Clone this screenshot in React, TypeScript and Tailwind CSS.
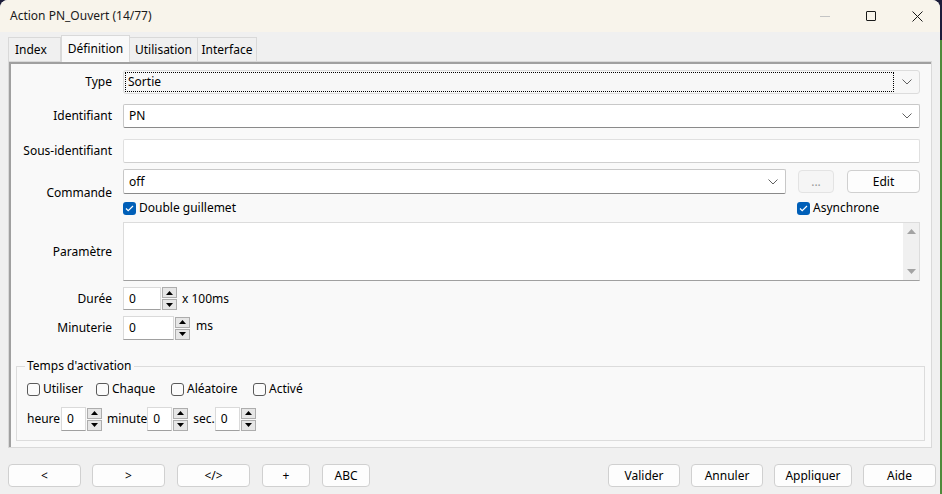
import React from 'react';

const font = "font-['Noto_Sans',sans-serif]";

function Chevron() {
  return (
    <svg width="10" height="6" viewBox="0 0 10 6">
      <path d="M0.5 0.5l4.5 4.5 4.5-4.5" fill="none" stroke="#606060" strokeWidth="1" />
    </svg>
  );
}

function CheckBox({ checked, label }: { checked?: boolean; label: string }) {
  return (
    <div className="flex items-center gap-[3px]">
      {checked ? (
        <div className="w-[13px] h-[13px] rounded-[3px] bg-[#005fb8] flex items-center justify-center">
          <svg width="9" height="7" viewBox="0 0 9 7">
            <path d="M1 3.5l2.2 2.2L8 1" fill="none" stroke="white" strokeWidth="1.2" />
          </svg>
        </div>
      ) : (
        <div className="w-[13px] h-[13px] rounded-[3px] border border-[#5a5a5a] bg-[#fbfbfb]" />
      )}
      <span>{label}</span>
    </div>
  );
}

function Spin({ box, h = 24 }: { box: number; h?: number }) {
  return (
    <div className="flex" style={{ height: h }}>
      <div
        className="bg-white border border-[#dadada] border-b-[#a0a0a0] flex items-center pl-[5px]"
        style={{ width: box }}
      >
        0
      </div>
      <div className="flex flex-col justify-center gap-[1px] ml-[1px] w-[15px]">
        <div className="h-[11px] border border-[#adadad] bg-[#e6e6e6] flex items-center justify-center">
          <svg width="7" height="4" viewBox="0 0 7 4"><path d="M0 4h7L3.5 0z" fill="#000" /></svg>
        </div>
        <div className="h-[11px] border border-[#adadad] bg-[#e6e6e6] flex items-center justify-center">
          <svg width="7" height="4" viewBox="0 0 7 4"><path d="M0 0h7L3.5 4z" fill="#000" /></svg>
        </div>
      </div>
    </div>
  );
}

function Btn({ w, label, disabled }: { w: number; label: string; disabled?: boolean }) {
  return (
    <div
      className={`h-[23px] rounded-[4px] border flex items-center justify-center ${
        disabled ? 'border-[#e3e3e3] bg-[#f5f5f5] text-[#9a9a9a]' : 'border-[#d0d0d0] bg-[#fdfdfd] text-black'
      }`}
      style={{ width: w }}
    >
      {label}
    </div>
  );
}

function Row({ label, children, className = '' }: { label: string; children: React.ReactNode; className?: string }) {
  return (
    <div className={`flex items-center ${className}`}>
      <div className="w-[101px] text-right shrink-0">{label}</div>
      <div className="ml-[11px] flex-1">{children}</div>
    </div>
  );
}

export default function App() {
  return (
    <div className={`w-[942px] h-[494px] flex bg-[#1c1d3a] overflow-hidden text-[12px] text-black ${font}`}>
      <div className="w-[940px] h-[494px] rounded-t-[8px] bg-[#f0f0f0] flex flex-col overflow-hidden">
        {/* title bar */}
        <div className="h-[32px] bg-[#f8f4eb] flex items-center shrink-0">
          <div className="pl-[10px] flex-1 text-[#1a1a1a]">Action PN_Ouvert (14/77)</div>
          <div className="w-[46px] h-[32px] flex items-center justify-center">
            <div className="w-[10px] h-[1px] bg-[#c4c4c4]" />
          </div>
          <div className="w-[46px] h-[32px] flex items-center justify-center">
            <div className="w-[10px] h-[10px] border border-[#1a1a1a] rounded-[1px]" />
          </div>
          <div className="w-[46px] h-[32px] flex items-center justify-center">
            <svg width="11" height="11" viewBox="0 0 11 11">
              <path d="M0.5 0.5l10 10M10.5 0.5l-10 10" stroke="#1a1a1a" strokeWidth="1" />
            </svg>
          </div>
        </div>

        {/* tabs */}
        <div className="h-[29px] flex items-end pl-[8px] shrink-0">
          <div className="h-[24px] px-[6px] border border-b-0 border-[#d9d9d9] bg-[#f0f0f0] flex items-center w-[53px]">Index</div>
          <div className="h-[27px] -mb-[1px] relative z-10 border border-b-0 border-[#d9d9d9] bg-[#f9f9f9] flex items-center justify-center w-[69px]">
            Définition
          </div>
          <div className="h-[24px] border border-b-0 border-l-0 border-[#d9d9d9] bg-[#f0f0f0] flex items-center justify-center w-[68px]">Utilisation</div>
          <div className="h-[24px] border border-b-0 border-l-0 border-[#d9d9d9] bg-[#f0f0f0] flex items-center justify-center w-[59px]">Interface</div>
        </div>

        {/* panel */}
        <div className="mx-[8px] h-[387px] border border-[#d9d9d9] bg-[#f9f9f9] shrink-0 flex">
          <div className="flex-1 border-l-[2px] border-t-[2px] border-[#a0a0a0] flex flex-col pt-[6px] pr-[11px]">
            <Row label="Type">
              <div className="h-[24px] border border-[#dcdcdc] bg-[#f7f7f7] rounded-[3px] flex items-center pl-[1px] pr-[7px]">
                <div className="flex-1 h-[20px] border border-dotted border-black flex items-center pl-[2px]">Sortie</div>
                <div className="ml-[8px]"><Chevron /></div>
              </div>
            </Row>
            <Row label="Identifiant" className="mt-[10px]">
              <div className="h-[24px] border border-[#c8c8c8] border-b-[#8a8a8a] bg-white rounded-[2px] flex items-center pl-[5px] pr-[7px]">
                <div className="flex-1">PN</div>
                <Chevron />
              </div>
            </Row>
            <Row label="Sous-identifiant" className="mt-[11px]">
              <div className="h-[24px] border border-[#e0e0e0] border-b-[#cfcfcf] bg-white rounded-[2px]" />
            </Row>
            <Row label="Commande" className="mt-[6px]">
              <div className="flex flex-col">
                <div className="flex items-center">
                  <div className="flex-1 h-[25px] border border-[#c8c8c8] border-b-[#8a8a8a] bg-white rounded-[2px] flex items-center pl-[5px] pr-[7px]">
                    <div className="flex-1">off</div>
                    <Chevron />
                  </div>
                  <div className="ml-[12px]"><Btn w={36} label="..." disabled /></div>
                  <div className="ml-[13px]"><Btn w={73} label="Edit" /></div>
                </div>
                <div className="flex items-center h-[18px] mt-[5px]">
                  <div className="flex-1"><CheckBox checked label="Double guillemet" /></div>
                  <div className="w-[123px]"><CheckBox checked label="Asynchrone" /></div>
                </div>
              </div>
            </Row>
            <Row label="Paramètre" className="mt-[5px]">
              <div className="h-[59px] border border-[#dcdcdc] border-b-[#a0a0a0] bg-white flex justify-end">
                <div className="w-[16px] bg-[#f0f0f0] flex flex-col items-center justify-between py-[6px]">
                  <svg width="9" height="5" viewBox="0 0 9 5"><path d="M0 5h9L4.5 0z" fill="#a3a3a3" /></svg>
                  <svg width="9" height="5" viewBox="0 0 9 5"><path d="M0 0h9L4.5 5z" fill="#a3a3a3" /></svg>
                </div>
              </div>
            </Row>
            <Row label="Durée" className="mt-[6px]">
              <div className="flex items-center gap-[5px]">
                <Spin box={38} h={23} />
                <span>x 100ms</span>
              </div>
            </Row>
            <Row label="Minuterie" className="mt-[6px]">
              <div className="flex items-center gap-[6px]">
                <Spin box={51} />
                <span className="-mt-[4px]">ms</span>
              </div>
            </Row>

            <fieldset className="mt-[17px] ml-[5px] mr-[-5px] border border-[#dcdcdc] px-[10px] pb-[8px] h-[84px]">
              <legend className="ml-[-2px] px-[2px]">Temps d&apos;activation</legend>
              <div className="flex items-center mt-[6px] h-[16px]">
                <div className="w-[69px]"><CheckBox label="Utiliser" /></div>
                <div className="w-[75px]"><CheckBox label="Chaque" /></div>
                <div className="w-[82px]"><CheckBox label="Aléatoire" /></div>
                <CheckBox label="Activé" />
              </div>
              <div className="flex items-center mt-[10px]">
                <span>heure</span>
                <div className="ml-[1px]"><Spin box={25} /></div>
                <span className="ml-[5px]">minute</span>
                <div className="ml-[0px]"><Spin box={25} /></div>
                <span className="ml-[5px]">sec.</span>
                <div className="ml-[0px]"><Spin box={25} /></div>
              </div>
            </fieldset>
          </div>
        </div>

        {/* bottom buttons */}
        <div className="flex items-center pl-[8px] pr-[4px] mt-[16px]">
          <Btn w={73} label="<" />
          <div className="ml-[11px]"><Btn w={73} label=">" /></div>
          <div className="ml-[12px]"><Btn w={73} label="</>" /></div>
          <div className="ml-[12px]"><Btn w={48} label="+" /></div>
          <div className="ml-[12px]"><Btn w={48} label="ABC" /></div>
          <div className="flex-1" />
          <Btn w={72} label="Valider" />
          <div className="ml-[11px]"><Btn w={72} label="Annuler" /></div>
          <div className="ml-[11px]"><Btn w={78} label="Appliquer" /></div>
          <div className="ml-[11px]"><Btn w={73} label="Aide" /></div>
        </div>
      </div>
      <div className="w-[2px] flex flex-col">
        <div className="h-[40px] bg-[#1c1d3a]" />
        <div className="flex-1 bg-[#4f8a3a]" />
      </div>
    </div>
  );
}
